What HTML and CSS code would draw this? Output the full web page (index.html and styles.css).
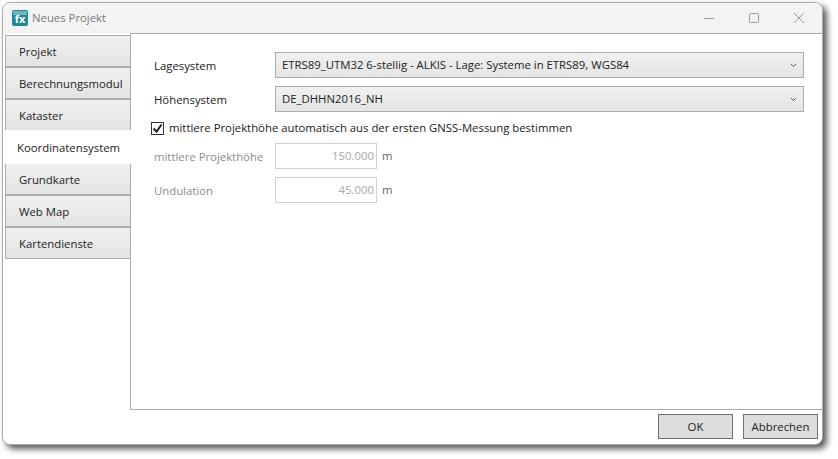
FILE: index.html
```html
<!DOCTYPE html>
<html lang="de">
<head>
<meta charset="utf-8">
<title>Neues Projekt</title>
<link rel="stylesheet" href="styles.css">
</head>
<body>
<div class="window">
  <header class="titlebar">
    <svg class="appicon" width="16" height="16" viewBox="0 0 16 16"><rect width="16" height="16" rx="2" fill="#1f8a99"/><rect x="1" y="1" width="14" height="4" rx="1" fill="#6fb6c0"/><text x="8" y="13" text-anchor="middle" class="fx">fx</text></svg>
    <span class="title">Neues Projekt</span>
    <div class="caption">
      <svg width="12" height="12" viewBox="0 0 12 12"><path d="M1 6.5h10" stroke="#999" fill="none"/></svg>
      <svg width="12" height="12" viewBox="0 0 12 12"><rect x="1.5" y="1.5" width="9" height="9" rx="1" stroke="#999" fill="none"/></svg>
      <svg width="12" height="12" viewBox="0 0 12 12"><path d="M1 1l10 10M11 1L1 11" stroke="#999" fill="none"/></svg>
    </div>
  </header>
  <div class="main">
    <nav class="tabs">
      <div class="tab">Projekt</div>
      <div class="tab">Berechnungsmodul</div>
      <div class="tab">Kataster</div>
      <div class="tab active">Koordinatensystem</div>
      <div class="tab">Grundkarte</div>
      <div class="tab">Web Map</div>
      <div class="tab">Kartendienste</div>
    </nav>
    <section class="pane">
      <div class="row">
        <label class="lbl">Lagesystem</label>
        <div class="combo"><span>ETRS89_UTM32 6-stellig - ALKIS - Lage: Systeme in ETRS89, WGS84</span><svg width="7" height="5" viewBox="0 0 7 5"><path d="M1 1l2.5 2.5L6 1" stroke="#555" fill="none"/></svg></div>
      </div>
      <div class="row">
        <label class="lbl">Höhensystem</label>
        <div class="combo"><span>DE_DHHN2016_NH</span><svg width="7" height="5" viewBox="0 0 7 5"><path d="M1 1l2.5 2.5L6 1" stroke="#555" fill="none"/></svg></div>
      </div>
      <div class="check">
        <span class="box"><svg width="11" height="11" viewBox="0 0 11 11"><path d="M1.5 5.5l3 3.2L9.6 1.5" stroke="#222" stroke-width="2" fill="none"/></svg></span>
        <span>mittlere Projekthöhe automatisch aus der ersten GNSS-Messung bestimmen</span>
      </div>
      <div class="row disabled">
        <label class="lbl">mittlere Projekthöhe</label>
        <div class="num">150.000</div><span class="unit">m</span>
      </div>
      <div class="row disabled">
        <label class="lbl">Undulation</label>
        <div class="num">45.000</div><span class="unit">m</span>
      </div>
    </section>
  </div>
  <footer class="actions">
    <button class="btn">OK</button>
    <button class="btn">Abbrechen</button>
  </footer>
</div>
</body>
</html>
```
FILE: styles.css
```css
* { box-sizing: border-box; }
html, body { margin: 0; height: 100%; background: #fff; overflow: hidden; }
body { padding: 2px 0 0 2px; font: 11.35px/16px "Open Sans", "Noto Sans", sans-serif; color: #222; }
.window {
  width: 821px; height: 443px; display: flex; flex-direction: column;
  background: #fff; border: 1px solid #aaa; border-radius: 8px;
  box-shadow: 4px 4px 6px rgba(0,0,0,.65); overflow: hidden;
}
.titlebar { height: 30px; flex: none; display: flex; align-items: center; padding-left: 9px; background: #f3f3f3; }
.appicon { flex: none; }
.fx { font: bold 11px "Open Sans", sans-serif; fill: #fff; }
.title { margin-left: 4px; color: #7a7a7a; }
.caption { margin-left: auto; display: flex; gap: 33px; padding-right: 17px; }
.main { flex: none; height: 377px; display: flex; }
.tabs { width: 127px; flex: none; padding: 2px 0 0 2px; display: flex; flex-direction: column; }
.tab {
  flex: none; height: 32px; width: 125px; padding: 1px 0 0 13px; display: flex; align-items: center;
  background: linear-gradient(#f0f0f0, #e4e4e4); border: 1px solid #acacac; border-right: 0; white-space: nowrap;
}
.tab.active {
  height: 34px; width: 128px; margin: -1px 0 -1px -2px; padding-left: 14px; border: 0;
  background: #fff; position: relative; z-index: 1;
}
.pane { flex: 1; border: 1px solid #acacac; border-right: 0; padding: 18px 18px 0 23px; }
.row { display: flex; align-items: center; height: 26px; margin-bottom: 8px; }
.lbl { width: 121px; flex: none; padding-top: 1px; }
.combo {
  flex: 1; height: 26px; display: flex; align-items: center; justify-content: space-between; padding: 0 6px;
  background: linear-gradient(#f0f0f0, #e4e4e4); border: 1px solid #acacac;
}
.check { display: flex; align-items: center; gap: 5px; height: 16px; margin: 0 0 7px -3px; }
.box { width: 13px; height: 13px; border: 1px solid #333; background: #fff; display: flex; align-items: center; justify-content: center; }
.disabled { color: #8c8c8c; }
.num { width: 102px; height: 26px; border: 1px solid #d0d0d0; text-align: right; padding: 4px 2px 0 0; color: #a8a8a8; }
.unit { margin-left: 5px; color: #666; }
.actions { flex: 1; display: flex; justify-content: flex-end; align-items: flex-start; gap: 10px; padding: 4px 4px 0 0; }
.btn { width: 75px; height: 25px; font: inherit; color: #222; background: #ddd; border: 1px solid #707070; padding: 0; }
```
